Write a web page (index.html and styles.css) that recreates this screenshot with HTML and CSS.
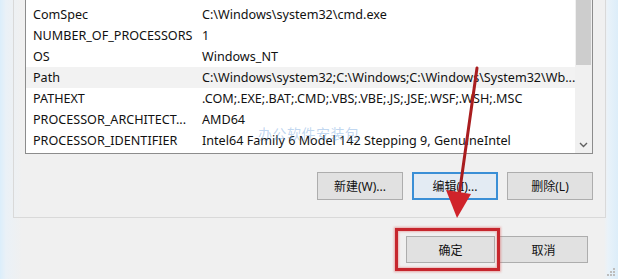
FILE: index.html
```html
<!DOCTYPE html>
<html lang="zh-CN">
<head>
<meta charset="utf-8">
<title>环境变量</title>
<link rel="stylesheet" href="styles.css">
</head>
<body>
<div class="window">
  <div class="group">
    <div class="listbox">
      <div class="rows">
        <div class="row"><span class="name">ComSpec</span><span class="value">C:\Windows\system32\cmd.exe</span></div>
        <div class="row"><span class="name">NUMBER_OF_PROCESSORS</span><span class="value">1</span></div>
        <div class="row"><span class="name">OS</span><span class="value">Windows_NT</span></div>
        <div class="row selected"><span class="name">Path</span><span class="value">C:\Windows\system32;C:\Windows;C:\Windows\System32\Wb...</span></div>
        <div class="row"><span class="name">PATHEXT</span><span class="value">.COM;.EXE;.BAT;.CMD;.VBS;.VBE;.JS;.JSE;.WSF;.WSH;.MSC</span></div>
        <div class="row"><span class="name">PROCESSOR_ARCHITECT...</span><span class="value">AMD64</span></div>
        <div class="row"><span class="name">PROCESSOR_IDENTIFIER</span><span class="value">Intel64 Family 6 Model 142 Stepping 9, GenuineIntel</span></div>
      </div>
      <div class="scrollbar">
        <div class="thumb"></div>
        <div class="track"></div>
        <div class="arrow-down">
          <svg width="9" height="6" viewBox="0 0 9 6"><path d="M1 1 L4.5 4.5 L8 1" fill="none" stroke="#606060" stroke-width="1.4"/></svg>
        </div>
      </div>
    </div>
    <div class="list-actions">
      <button class="btn">新建(W)...</button>
      <button class="btn focused">编辑(I)...</button>
      <button class="btn">删除(L)</button>
    </div>
  </div>
  <div class="dialog-actions">
    <button class="btn wide">确定</button>
    <button class="btn wide">取消</button>
  </div>

  <div class="watermark">办公软件安装包</div>
  <div class="highlight-box"></div>
  <svg class="annot-arrow" width="618" height="279" viewBox="0 0 618 279">
    <line x1="477" y1="68" x2="459" y2="196" stroke="#a91d1f" stroke-width="3" stroke-linecap="round"/>
    <polygon points="446,190 471,194 457,218" fill="#d0232a"/>
  </svg>
  <svg class="grip" width="8" height="8" viewBox="0 0 8 8">
    <rect x="6" y="0" width="2" height="2" fill="#bdbdbd"/>
    <rect x="3" y="3" width="2" height="2" fill="#bdbdbd"/>
    <rect x="6" y="3" width="2" height="2" fill="#bdbdbd"/>
    <rect x="0" y="6" width="2" height="2" fill="#bdbdbd"/>
    <rect x="3" y="6" width="2" height="2" fill="#bdbdbd"/>
    <rect x="6" y="6" width="2" height="2" fill="#bdbdbd"/>
  </svg>
</div>
</body>
</html>
```

FILE: styles.css
```css
* { box-sizing: border-box; }
html, body { margin: 0; padding: 0; }
body {
  width: 618px;
  height: 279px;
  overflow: hidden;
  font-family: "Noto Sans", "Noto Sans CJK SC", sans-serif;
  font-size: 12px;
  color: #111;
}
.window {
  position: relative;
  width: 618px;
  height: 279px;
  padding-left: 13px;
  background: linear-gradient(to right, #dbeefb 0px, #eaf1f7 6px, #f0f0f0 22px, #f0f0f0 604px, #e9f2f9 608px, #dcedf9 618px);
}
.group {
  width: 593px;
  height: 218px;
  border: 1px solid #d9d9d9;
  border-top: none;
  padding: 0 12px 0 11px;
}
.listbox {
  position: relative;
  width: 568px;
  height: 154px;
  background: #fff;
  border: 1px solid #8c8c8c;
  border-top: none;
  display: flex;
  overflow: hidden;
}
.rows {
  flex: 1;
  padding-top: 4px;
}
.row {
  height: 21px;
  display: flex;
  align-items: center;
  padding-left: 7px;
  white-space: nowrap;
  font-size: 12.6px;
}
.row.selected { background: #f2f2f2; }
.name { width: 169px; flex: none; }
.value { flex: none; }
.scrollbar {
  width: 17px;
  flex: none;
  display: flex;
  flex-direction: column;
  background: #f0f0f0;
}
.thumb {
  height: 65px;
  margin: 0 1px 0 1px;
  background: #cdcdcd;
}
.track { flex: 1; }
.arrow-down {
  height: 17px;
  display: flex;
  align-items: center;
  justify-content: center;
}
.list-actions {
  display: flex;
  justify-content: flex-end;
  gap: 9px;
  margin-top: 18px;
}
.btn {
  width: 86px;
  height: 28px;
  padding: 0;
  font-family: "Noto Sans", "Noto Sans CJK SC", sans-serif;
  font-size: 12px;
  color: #111;
  background: #e1e1e1;
  border: 1px solid #adadad;
  border-radius: 0;
}
.btn.focused {
  border: 2px solid #3a8fd6;
  background: #e3ebf3;
}
.btn.wide { width: 89px; height: 27px; }
.dialog-actions {
  display: flex;
  justify-content: flex-end;
  gap: 4px;
  padding-top: 18px;
  padding-right: 30px;
}
.watermark {
  position: absolute;
  left: 258px;
  top: 123px;
  font-family: "Noto Sans CJK SC", sans-serif;
  font-size: 14px;
  letter-spacing: 0.5px;
  color: rgba(90, 150, 215, 0.4);
  pointer-events: none;
}
.highlight-box {
  position: absolute;
  left: 395px;
  top: 228px;
  width: 105px;
  height: 43px;
  border: 3px solid #c6262d;
  box-shadow: 0 0 2px 1px rgba(220, 80, 80, 0.45), inset 0 0 2px 1px rgba(220, 80, 80, 0.35);
}
.annot-arrow {
  position: absolute;
  left: 0;
  top: 0;
}
.grip {
  position: absolute;
  left: 607px;
  top: 268px;
}
```
